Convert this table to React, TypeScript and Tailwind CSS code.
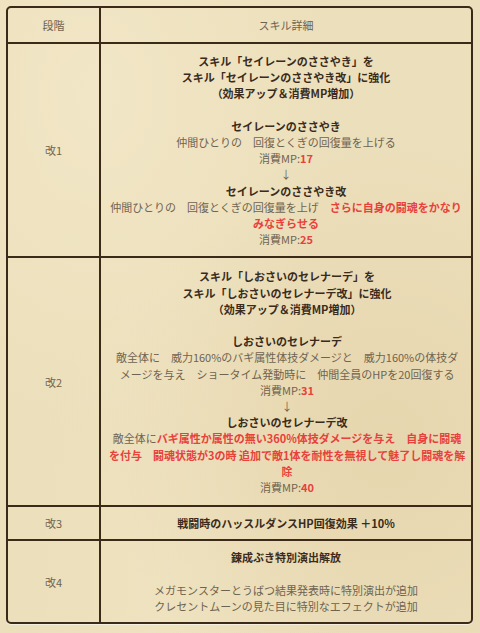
type Seg = { t: string; k?: 'n' | 'b' | 'r' };
type Line = Seg[];

const segClass = {
  n: 'text-[#6f6350] font-normal',
  b: 'text-[#3a2b1c] font-bold',
  r: 'text-[#e8413b] font-bold',
};

const n = (t: string): Seg => ({ t, k: 'n' });
const b = (t: string): Seg => ({ t, k: 'b' });
const r = (t: string): Seg => ({ t, k: 'r' });
const blank: Line = [{ t: '\u00a0' }];

const rows: { label: string; pad: string; lines: Line[] }[] = [
  {
    label: '改1',
    pad: 'py-[9px]',
    lines: [
      [b('スキル「セイレーンのささやき」を')],
      [b('スキル「セイレーンのささやき改」に強化')],
      [b('（効果アップ＆消費MP増加）')],
      blank,
      [b('セイレーンのささやき')],
      [n('仲間ひとりの　回復とくぎの回復量を上げる')],
      [n('消費MP:'), r('17')],
      [n('↓')],
      [b('セイレーンのささやき改')],
      [n('仲間ひとりの　回復とくぎの回復量を上げ　'), r('さらに自身の闘魂をかなり')],
      [r('みなぎらせる')],
      [n('消費MP:'), r('25')],
    ],
  },
  {
    label: '改2',
    pad: 'py-[10px]',
    lines: [
      [b('スキル「しおさいのセレナーデ」を')],
      [b('スキル「しおさいのセレナーデ改」に強化')],
      [b('（効果アップ＆消費MP増加）')],
      blank,
      [b('しおさいのセレナーデ')],
      [n('敵全体に　威力160%のバギ属性体技ダメージと　威力160%の体技ダ')],
      [n('メージを与え　ショータイム発動時に　仲間全員のHPを20回復する')],
      [n('消費MP:'), r('31')],
      [n('↓')],
      [b('しおさいのセレナーデ改')],
      [n('敵全体に'), r('バギ属性か属性の無い360%体技ダメージを与え　自身に闘魂')],
      [r('を付与　闘魂状態が3の時 追加で敵1体を耐性を無視して魅了し闘魂を解')],
      [r('除')],
      [n('消費MP:'), r('40')],
    ],
  },
  {
    label: '改3',
    pad: 'py-[8px]',
    lines: [[b('戦闘時のハッスルダンスHP回復効果 ＋10%')]],
  },
  {
    label: '改4',
    pad: 'py-[8px]',
    lines: [
      [b('錬成ぶき特別演出解放')],
      blank,
      [n('メガモンスターとうばつ結果発表時に特別演出が追加')],
      [n('クレセントムーンの見た目に特別なエフェクトが追加')],
    ],
  },
];

export default function App() {
  return (
    <div className="w-[480px] h-[633px] bg-[#ecdfbb] bg-[radial-gradient(ellipse_at_20%_15%,#f1e6c6_0%,transparent_45%),radial-gradient(ellipse_at_80%_70%,#e6d6ae_0%,transparent_50%),radial-gradient(ellipse_at_40%_90%,#efe3c1_0%,transparent_40%)] pt-[6px] pl-[6px] font-['Noto_Sans_CJK_JP','Liberation_Sans',sans-serif] text-[11px] leading-[16.2px]">
      <div className="w-[467px] border-2 border-[#3b2a18] rounded-[5px] shadow-[0_1px_0_rgba(255,255,255,0.5)]">
        <div className="grid grid-cols-[93px_1fr] border-b-2 border-[#3b2a18] h-[36px]">
          <div className="border-r-2 border-[#3b2a18] flex items-center justify-center text-[#6f6350]">段階</div>
          <div className="flex items-center justify-center text-[#6f6350]">スキル詳細</div>
        </div>
        {rows.map((row, i) => (
          <div
            key={row.label}
            className={`grid grid-cols-[93px_1fr] ${i < rows.length - 1 ? 'border-b-2 border-[#3b2a18]' : ''}`}
          >
            <div className="border-r-2 border-[#3b2a18] flex items-center justify-center text-[#6f6350]">
              {row.label}
            </div>
            <div className={`${row.pad} px-2 flex flex-col items-center`}>
              {row.lines.map((line, j) => (
                <div key={j} className="whitespace-nowrap text-center">
                  {line.map((s, k) => (
                    <span key={k} className={segClass[s.k ?? 'n']}>
                      {s.t}
                    </span>
                  ))}
                </div>
              ))}
            </div>
          </div>
        ))}
      </div>
    </div>
  );
}
